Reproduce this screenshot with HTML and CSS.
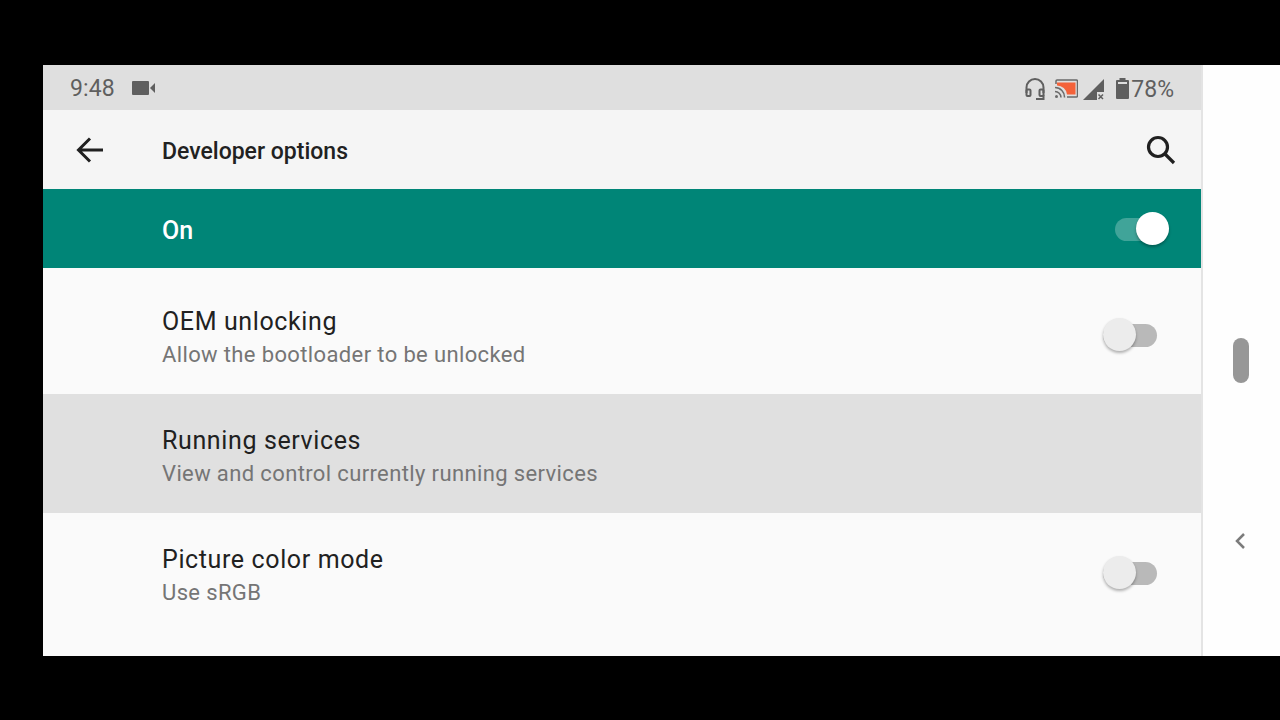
FILE: index.html
```html
<!DOCTYPE html>
<html lang="en">
<head>
  <meta charset="UTF-8" />
  <title>Developer options</title>
  <link rel="stylesheet" href="styles.css">
</head>
<body>
  <div class="screen">
    <div class="main">
      <div class="status">
        <div class="status-left">
          <span class="time">9:48</span>
          <svg class="cam" width="23" height="14" viewBox="0 0 23 14"><path d="M1 0h15a1 1 0 0 1 1 1v12a1 1 0 0 1-1 1H1a1 1 0 0 1-1-1V1a1 1 0 0 1 1-1z" fill="#5f5f5f"/><path d="M18 7l5-5v10z" fill="#5f5f5f"/></svg>
        </div>
        <div class="status-right">
          <svg class="headset" width="20" height="23" viewBox="0 0 20 23" fill="none" stroke="#5f5f5f" stroke-width="2"><path d="M1.500 15V9.500a8.500 8.500 0 0 1 17 0V15"/><rect x="1.500" y="11.500" width="4" height="6.500" rx="1"/><rect x="14.500" y="11.500" width="4" height="6.500" rx="1"/><path d="M18.500 17v4H11"/></svg>
          <svg class="cast" width="23" height="20" viewBox="0 0 23 20"><path d="M1 5V2a1 1 0 0 1 1-1h19.500a1 1 0 0 1 1 1v15a1 1 0 0 1-1 1H12" fill="none" stroke="#6a6a6a" stroke-width="1.500"/><path d="M2 3.500h18.500v12H12A10 10 0 0 0 2 6.500z" fill="#f4623a"/><path d="M0 8.500A9.500 9.500 0 0 1 9.500 18.500M0 12.500A6 6 0 0 1 6 18.500" fill="none" stroke="#6a6a6a" stroke-width="1.500"/><circle cx="1.500" cy="17.500" r="1.500" fill="#6a6a6a"/></svg>
          <svg class="signal" width="21" height="21" viewBox="0 0 21 21"><path d="M0 21L21 0v13h-7v8z" fill="#5f5f5f"/><path d="M15.500 15.500l4.500 4.500M20 15.500L15.500 20" stroke="#5f5f5f" stroke-width="1.500"/></svg>
          <svg class="battery" width="13" height="21" viewBox="0 0 13 21"><path d="M3.500 0h6v2H12a1 1 0 0 1 1 1v17a1 1 0 0 1-1 1H1a1 1 0 0 1-1-1V3a1 1 0 0 1 1-1h2.500z" fill="#5f5f5f"/><rect x="2" y="4" width="9" height="2" fill="#dfdfdf"/></svg>
          <span class="pct">78%</span>
        </div>
      </div>

      <div class="appbar">
        <svg class="back" width="28" height="26" viewBox="0 0 28 26" fill="none" stroke="#202020" stroke-width="3"><path d="M27 13H3M14 1.500L2.500 13 14 24.500"/></svg>
        <span class="title">Developer options</span>
        <svg class="search" width="30" height="30" viewBox="0 0 30 30" fill="none" stroke="#202020" stroke-width="3.200"><circle cx="12" cy="12" r="9.500"/><path d="M18.500 18.500L28 28"/></svg>
      </div>

      <div class="master">
        <span class="master-label">On</span>
        <div class="switch on"><span class="track"></span><span class="thumb"></span></div>
      </div>

      <div class="row first">
        <div class="row-text">
          <div class="row-title">OEM unlocking</div>
          <div class="row-sub">Allow the bootloader to be unlocked</div>
        </div>
        <div class="switch off"><span class="track"></span><span class="thumb"></span></div>
      </div>
      <div class="row pressed">
        <div class="row-text">
          <div class="row-title">Running services</div>
          <div class="row-sub">View and control currently running services</div>
        </div>
      </div>
      <div class="row">
        <div class="row-text">
          <div class="row-title">Picture color mode</div>
          <div class="row-sub">Use sRGB</div>
        </div>
        <div class="switch off"><span class="track"></span><span class="thumb"></span></div>
      </div>
    </div>

    <div class="rail">
      <div class="handle"></div>
      <svg class="chevron" width="12" height="18" viewBox="0 0 12 18" fill="none" stroke="#7b7b7b" stroke-width="2.500"><path d="M10 2L3 9l7 7"/></svg>
    </div>
  </div>
</body>
</html>
```

FILE: styles.css
```css
html, body {
  margin: 0;
  height: 100%;
  background: #000;
  overflow: hidden;
}

body {
  font-family: Roboto, "Liberation Sans", sans-serif;
  padding: 65px 0 64px 43px;
  box-sizing: border-box;
}

.screen {
  display: flex;
  height: 591px;
  background: #fefefe;
}

.main {
  width: 1158px;
  background: #fafafa;
  display: flex;
  flex-direction: column;
}

.status {
  height: 45px;
  flex: none;
  background: #dfdfdf;
  display: flex;
  justify-content: space-between;
  align-items: center;
  padding: 0 27px 0 27px;
  color: #5f5f5f;
}

.status-left,
.status-right {
  display: flex;
  align-items: center;
}

.time {
  font-size: 23px;
  letter-spacing: 0.1px;
  margin: 2px 17px 0 0;
}

.headset {
  margin: 3px 10px 0 0;
}

.cast {
  margin: 2px 5px 0 0;
}

.signal {
  margin: 3px 12px 0 0;
}

.battery {
  margin: 2px 2px 0 0;
}

.pct {
  font-size: 23px;
  margin-top: 3px;
}

.appbar {
  height: 79px;
  flex: none;
  background: #f5f5f5;
  display: flex;
  align-items: center;
  padding: 0 25px 0 33px;
}

.title {
  font-size: 23px;
  font-weight: 500;
  color: #212121;
  margin: 3px 0 0 58px;
  flex: 1;
}

.master {
  height: 79px;
  flex: none;
  background: #008577;
  display: flex;
  justify-content: space-between;
  align-items: center;
  padding: 0 32px 0 119px;
}

.master-label {
  font-size: 25px;
  font-weight: 500;
  color: #fff;
  margin-top: 4px;
}

.switch {
  position: relative;
  width: 54px;
  height: 34px;
}

.track {
  position: absolute;
  left: 0;
  top: 6px;
  width: 54px;
  height: 23px;
  border-radius: 12px;
}

.thumb {
  position: absolute;
  top: 0;
  width: 33px;
  height: 33px;
  border-radius: 50%;
  box-shadow: 0 2px 3px rgba(0, 0, 0, 0.3);
}

.on .track {
  background: #40a499;
}

.on .thumb {
  right: 0;
  background: #fff;
}

.off .track {
  background: #b9b9b9;
}

.off .thumb {
  left: 0;
  background: #ececec;
}

.row {
  height: 119px;
  flex: none;
  display: flex;
  justify-content: space-between;
  align-items: center;
  padding: 0 44px 0 119px;
  box-sizing: border-box;
}

.row.first {
  height: 126px;
  padding-top: 7px;
}

.row.pressed {
  background: #e0e0e0;
}

.row-text {
  padding-top: 6px;
}

.row-title {
  font-size: 25px;
  color: #212121;
  line-height: 33px;
  letter-spacing: 0.62px;
}

.row-sub {
  font-size: 22px;
  color: #757575;
  line-height: 33px;
  letter-spacing: 0.37px;
}

.rail {
  flex: 1;
  border-left: 2px solid #e4e4e4;
  position: relative;
}

.handle {
  position: absolute;
  left: 30px;
  top: 273px;
  width: 16px;
  height: 45px;
  border-radius: 8px;
  background: #979797;
}

.chevron {
  position: absolute;
  left: 31px;
  top: 467px;
}
```
